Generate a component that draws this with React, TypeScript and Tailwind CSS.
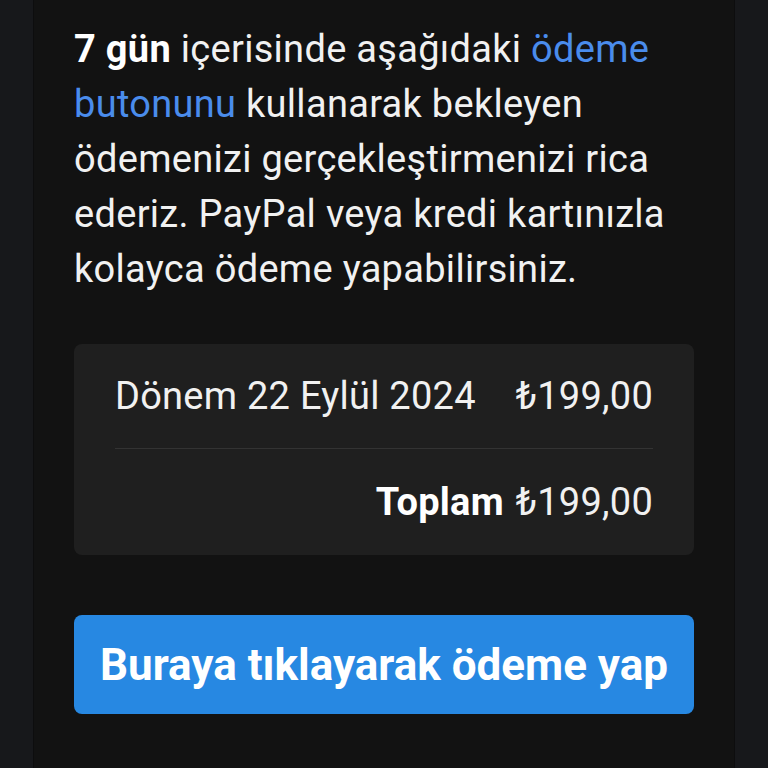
import React from 'react';

const App: React.FC = () => {
  return (
    <div className="min-h-screen w-full bg-[#17181b] flex justify-center" style={{ fontFamily: 'Roboto, "Noto Sans", sans-serif' }}>
      <div className="w-[702px] min-h-screen bg-[#121212] border-x border-[#0d0d0e] px-[40px] pt-[22px]">
        <p className="text-[38px] leading-[55px] tracking-[0.3px] text-[#f1f1f1]">
          <span className="font-bold text-white">7 gün</span> içerisinde aşağıdaki{' '}
          <span className="text-[#4a8cec]">ödeme</span>{' '}
          <span className="text-[#4a8cec]">butonunu</span> kullanarak bekleyen ödemenizi gerçekleştirmenizi rica ederiz. PayPal veya kredi kartınızla kolayca ödeme yapabilirsiniz.
        </p>

        <div className="mt-[47px] bg-[#1f1f1f] rounded-lg px-[41px] text-[38px] tracking-[0.25px] text-[#f1f1f1]">
          <div className="h-[105px] flex items-center justify-between border-b border-[#333333]">
            <span>Dönem 22 Eylül 2024</span>
            <span>₺199,00</span>
          </div>
          <div className="h-[106px] flex items-center justify-end gap-[12px]">
            <span className="font-bold text-white">Toplam</span>
            <span>₺199,00</span>
          </div>
        </div>

        <button className="mt-[60px] w-full h-[99px] rounded-lg bg-[#2788e2] text-white text-[44px] font-bold">
          Buraya tıklayarak ödeme yap
        </button>
      </div>
    </div>
  );
};

export default App;
